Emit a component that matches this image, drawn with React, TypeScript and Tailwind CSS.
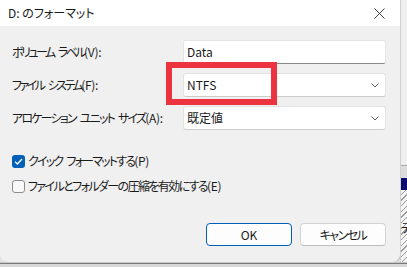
import React from "react";

const font = "font-['Noto_Sans_CJK_JP','Noto_Sans',sans-serif] [font-feature-settings:'palt']";

function Chevron() {
  return (
    <svg width="8" height="5" viewBox="0 0 8 5" className="shrink-0">
      <path d="M0.5 0.5 L4 4 L7.5 0.5" fill="none" stroke="#5c5c5c" strokeWidth="1" />
    </svg>
  );
}

function JText({ segs, suffix, kana }: { segs: string[]; suffix: string; kana: string }) {
  return (
    <span className="whitespace-nowrap">
      {segs.map((s, i) => (
        <React.Fragment key={i}>
          {i > 0 && <span className="inline-block w-[4px]" />}
          <span className={kana}>{s}</span>
        </React.Fragment>
      ))}
      <span className="tracking-[-0.3px]">{suffix}</span>
    </span>
  );
}

function Row({ label, children }: { label: React.ReactNode; children: React.ReactNode }) {
  return (
    <div className="flex items-center h-[24px]">
      <div className="w-[183px] pl-[12px] text-[12px] text-[#1a1a1a] leading-none">{label}</div>
      <div className="w-[203px] h-full">{children}</div>
    </div>
  );
}

function SelectBox({ value }: { value: string }) {
  return (
    <div className="h-full bg-white border border-[#e3e3e3] border-b-[#cccccc] rounded-[3px] flex items-center justify-between pl-[3px] pr-[6px] text-[12px] text-[#1a1a1a]">
      <span>{value}</span>
      <Chevron />
    </div>
  );
}

function Check({ checked, children }: { checked: boolean; children: React.ReactNode }) {
  return (
    <div className="flex items-center h-[20px] pl-[12px] gap-[3px] text-[12px] text-[#1a1a1a]">
      {checked ? (
        <div className="w-[13px] h-[13px] rounded-[3px] bg-[#005fb8] flex items-center justify-center">
          <svg width="9" height="7" viewBox="0 0 9 7">
            <path d="M1 3.6 L3.4 6 L8 1" fill="none" stroke="white" strokeWidth="1.3" />
          </svg>
        </div>
      ) : (
        <div className="w-[13px] h-[13px] rounded-[3px] border border-[#8d8d8d] bg-[#f8f8f8]" />
      )}
      {children}
    </div>
  );
}

export default function App() {
  return (
    <div className={`w-[407px] h-[267px] bg-[#e4e4e4] flex flex-col overflow-hidden ${font}`}>
      <div className="flex h-[262px]">
        <div className="w-[400px] h-full flex flex-col rounded-b-[8px] overflow-hidden shadow-[1px_0_2px_rgba(0,0,0,0.25)]">
          <div className="h-[26px] bg-white flex items-center justify-between pl-[8px] pr-[15px]">
            <span className="text-[12px] text-[#1a1a1a]">D: のフォーマット</span>
            <svg width="11" height="11" viewBox="0 0 11 11">
              <path d="M0.5 0.5 L10.5 10.5 M10.5 0.5 L0.5 10.5" stroke="#333333" strokeWidth="0.9" />
            </svg>
          </div>
          <div className="flex-1 bg-[#f0f0f0] relative flex flex-col pt-[14px]">
            <div className="flex flex-col gap-[9px]">
              <Row label={<JText segs={["ボリューム", "ラベル"]} suffix="(V):" kana="tracking-[-2.5px]" />}>
                <div className="h-full bg-white border border-[#e5e5e5] border-b-[#8a8a8a] rounded-[3px] flex items-center pl-[3px] text-[12px] text-[#1a1a1a]">
                  Data
                </div>
              </Row>
              <Row label={<JText segs={["ファイル", "システム"]} suffix="(F):" kana="tracking-[-2.5px]" />}>
                <SelectBox value="NTFS" />
              </Row>
              <Row label={<JText segs={["アロケーション", "ユニット", "サイズ"]} suffix="(A):" kana="tracking-[-1.8px]" />}>
                <SelectBox value="既定値" />
              </Row>
            </div>
            <div className="flex flex-col gap-[5px] mt-[21px]">
              <Check checked>
                <JText segs={["クイック", "フォーマットする"]} suffix="(P)" kana="tracking-[-1.8px]" />
              </Check>
              <Check checked={false}>
                <JText segs={["ファイルとフォルダーの圧縮を有効にする"]} suffix="(E)" kana="tracking-[-1.6px]" />
              </Check>
            </div>
            <div className="flex justify-end gap-[8px] pr-[14px] mt-[27px]">
              <div className="w-[86px] h-[23px] bg-[#fdfdfd] border border-[#005fb8] rounded-[4px] flex items-center justify-center text-[12px] text-[#1a1a1a] shadow-[inset_0_0_0_1px_#ffffff]">
                OK
              </div>
              <div className="w-[86px] h-[23px] bg-[#fdfdfd] border border-[#d3d3d3] border-b-[#bdbdbd] rounded-[4px] flex items-center justify-center text-[12px] text-[#1a1a1a] tracking-[-1.5px]">
                キャンセル
              </div>
            </div>
            <div className="absolute left-[166px] top-[36px] w-[111px] h-[43px] border-[6px] border-[#ec3440]" />
          </div>
        </div>
        <div className="flex-1 flex flex-col border-l border-[#d0d0d0] bg-[#ececec]">
          <div className="h-[165px] bg-[#efefef]" />
          <div className="h-[1px] bg-[#a8a8a8]" />
          <div className="h-[12px] bg-[#dcdcdc]" />
          <div className="h-[12px] bg-[#0b0a6d]" />
          <div className="flex-1 bg-[repeating-linear-gradient(135deg,#f4f4f4_0px,#f4f4f4_3px,#9a9a9a_3px,#9a9a9a_4px)] relative overflow-hidden">
            <span className="absolute left-[0px] top-[32px] text-[12px] leading-none text-[#1a1a1a]">テ</span>
          </div>
        </div>
      </div>
      <div className="h-[5px] flex flex-col">
        <div className="h-[1px] bg-[#c8c8c8]" />
        <div className="h-[1px] bg-[#7a7a7a]" />
        <div className="flex-1 bg-[#d8d8d8]" />
      </div>
    </div>
  );
}
